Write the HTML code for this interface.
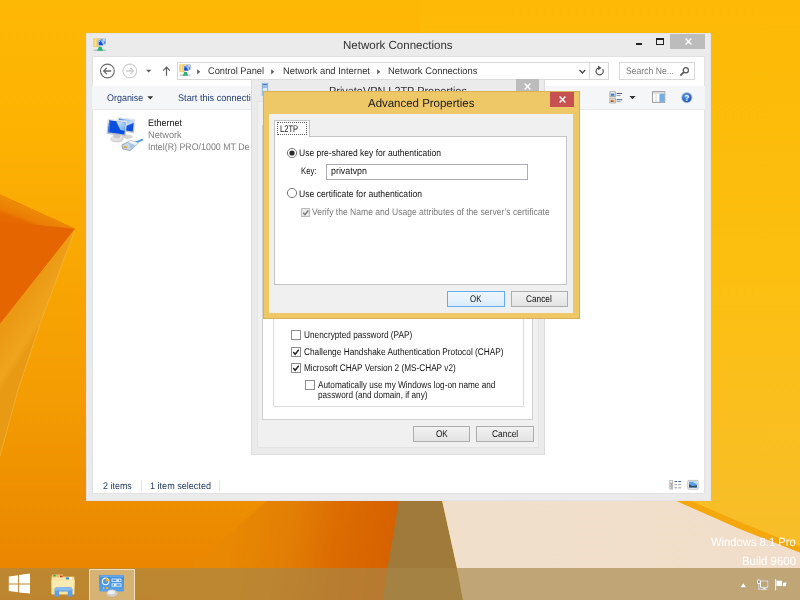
<!DOCTYPE html>
<html lang="en"><head><meta charset="utf-8"><title>Network Connections</title>
<style>
html,body{margin:0;padding:0}
body{width:800px;height:600px;overflow:hidden;position:relative;background:#FBB511;font-family:"Liberation Sans",sans-serif}
.a{position:absolute;box-sizing:border-box}
.t{position:absolute;white-space:nowrap;line-height:1;transform-origin:0 0;text-rendering:geometricPrecision;filter:blur(0.35px);font-family:"Liberation Sans",sans-serif}
svg{position:absolute;overflow:visible}
.clip{position:absolute;overflow:hidden}
.btn{position:absolute;box-sizing:border-box;border:1px solid #ADADAD;background:linear-gradient(#F2F2F2,#E3E3E3)}
.cb{position:absolute;box-sizing:border-box;border:1px solid #6E6E6E;background:#FFF}
</style></head>
<body>
<svg id="wall" width="800" height="600" viewBox="0 0 800 600" style="left:0;top:0">
<defs>
<linearGradient id="gR" x1="0" y1="0" x2="0" y2="1"><stop offset="0" stop-color="#FDB905"/><stop offset="0.45" stop-color="#FCBF10"/><stop offset="0.9" stop-color="#F8BE2A"/></linearGradient>
<linearGradient id="gL" x1="0" y1="0" x2="0" y2="1"><stop offset="0" stop-color="#FDB805"/><stop offset="0.225" stop-color="#FDB202"/><stop offset="0.333" stop-color="#FBAC03"/><stop offset="0.667" stop-color="#F39C03"/><stop offset="0.89" stop-color="#EC8A00"/><stop offset="1" stop-color="#E88200"/></linearGradient>
<linearGradient id="gTri" gradientUnits="userSpaceOnUse" x1="30" y1="206" x2="24" y2="222"><stop offset="0" stop-color="#EF8C08"/><stop offset="0.75" stop-color="#EB7E04"/><stop offset="1" stop-color="#E66A00"/></linearGradient>
<linearGradient id="gFold" gradientUnits="userSpaceOnUse" x1="20" y1="300" x2="48" y2="318"><stop offset="0" stop-color="#EB9814"/><stop offset="0.8" stop-color="#EFA41E"/><stop offset="1" stop-color="#E99A14"/></linearGradient>
<linearGradient id="gOr" gradientUnits="userSpaceOnUse" x1="232" y1="530" x2="395" y2="562"><stop offset="0" stop-color="#E98803"/><stop offset="0.35" stop-color="#E27E04"/><stop offset="0.62" stop-color="#DC6C02"/><stop offset="1" stop-color="#D66000"/></linearGradient>
<linearGradient id="gCream" gradientUnits="userSpaceOnUse" x1="450" y1="560" x2="760" y2="520"><stop offset="0" stop-color="#F0E0CB"/><stop offset="1" stop-color="#F1DECA"/></linearGradient>
</defs>
<rect x="0" y="0" width="800" height="600" fill="url(#gR)"/>
<rect x="0" y="0" width="420" height="600" fill="url(#gL)"/>
<polygon points="0,194.5 75,228.8 0,324" fill="#E56600"/><polygon points="0,194.5 75,228.8 0,221" fill="url(#gTri)"/>
<polygon points="74.5,230.5 40,324 18,390 0,456 0,324" fill="url(#gFold)"/><polyline points="74.5,231 40,324 18,390 0,456" fill="none" stroke="#F6BC48" stroke-width="0.8" stroke-opacity="0.7"/>
<polygon points="290,480 420,480 420,600 156,600" fill="url(#gOr)"/>
<polygon points="402,480 439,480 442,500 457,568 463,600 383,600 387.5,568 399,500" fill="#A07A3A"/>
<polygon points="439,480 629,480 675.5,500.5 740,529 800,552.5 800,600 463,600 457,568 442,500" fill="url(#gCream)"/>
<polygon points="629,480 675.5,500.5 740,529 800,552.5 800,546.5 740,522 690,500.5 642,480" fill="#F4A80E"/>
</svg>
<!-- ================= Explorer window ================= -->
<div class="a" id="explorer" style="left:86px;top:33px;width:624.7px;height:467.5px;background:#EBEBEB;border:1px solid #E4E4E8">
</div>
<div class="a" id="client" style="left:91.7px;top:56.4px;width:613.3px;height:438.1px;background:#FFF;border:1px solid #E2E2E2"></div>
<div class="a" id="cmdbar" style="left:92px;top:86px;width:613px;height:24px;background:#F5F6F7;border-bottom:1px solid #E9EAEB"></div>
<svg style="left:93.30px;top:37.90px" width="13.26" height="13.26" viewBox="0 0 13 13"><rect x="0.3" y="0.3" width="6.6" height="8.6" fill="#F2CC68"/><rect x="1.7" y="1" width="1.5" height="7.2" fill="#FAE6A4"/><rect x="4.4" y="0.8" width="1.2" height="7.6" fill="#E8B850"/><rect x="6.8" y="0.4" width="5.8" height="6" fill="#AEB8C6"/><rect x="7.6" y="1" width="4.4" height="4.6" fill="#4C84DC"/><polygon points="9,1 12,1 12,4" fill="#B4D2F4"/><rect x="4.8" y="1.7" width="5.9" height="6.4" fill="#E6EAF0"/><rect x="5.5" y="2.4" width="4.5" height="4.8" fill="#1650D8"/><polygon points="7.4,2.4 10,2.4 10,6.6" fill="#9CC8F4"/><rect x="5.9" y="2.8" width="1" height="1" fill="#DDEBFA"/><polygon points="5.7,8.7 8.3,8.7 9.5,12 4.3,12" fill="#1DB86A"/><rect x="0.6" y="11.5" width="12" height="0.9" fill="#A0A8B4"/><rect x="4.2" y="11.4" width="5.4" height="1.1" fill="#1DB86A"/></svg>
<span class="t" style="left:343.30px;top:40.00px;font-size:11.70px;transform:scaleX(0.9865);color:#333;">Network Connections</span>
<div class="a" style="left:636px;top:43.3px;width:6.4px;height:1.8px;background:#222"></div>
<div class="a" style="left:655.6px;top:38.2px;width:8.4px;height:6.6px;border:1.1px solid #222;border-top-width:2.2px"></div>
<div class="a" style="left:670.3px;top:33.8px;width:34.8px;height:14.8px;background:#BCBCBC"></div>
<svg style="left:684.8px;top:38.2px" width="7" height="7" viewBox="0 0 7 7"><path d="M0.6 0.6 L6.4 6.4 M6.4 0.6 L0.6 6.4" stroke="#FFF" stroke-width="1.4" fill="none"/></svg>
<svg style="left:99px;top:63px" width="80" height="16" viewBox="99 63 80 16"><circle cx="107.4" cy="71" r="6.9" fill="none" stroke="#6A6A6A" stroke-width="1.1"/><path d="M111.2 71 H104 M106.8 67.9 L103.7 71 L106.8 74.1" fill="none" stroke="#6A6A6A" stroke-width="1.3"/><circle cx="129.8" cy="71" r="6.9" fill="none" stroke="#CFCFCF" stroke-width="1.1"/><path d="M126 71 H133.2 M130.4 67.9 L133.5 71 L130.4 74.1" fill="none" stroke="#CFCFCF" stroke-width="1.3"/><polygon points="146.1,69.7 151.3,69.7 148.7,72.5" fill="#5E5E5E"/><path d="M166.5 75.8 V67.4 M163.2 70.6 L166.5 67.2 L169.8 70.6" fill="none" stroke="#5E5E5E" stroke-width="1.2"/></svg>
<div class="a" style="left:176.6px;top:62.2px;width:432px;height:17.4px;border:1px solid #D9D9D9;background:#FFF"></div>
<div class="a" style="left:589.4px;top:62.2px;width:1px;height:17.4px;background:#D9D9D9"></div>
<svg style="left:179.20px;top:64.40px" width="12.09" height="12.09" viewBox="0 0 13 13"><rect x="0.3" y="0.3" width="6.6" height="8.6" fill="#F2CC68"/><rect x="1.7" y="1" width="1.5" height="7.2" fill="#FAE6A4"/><rect x="4.4" y="0.8" width="1.2" height="7.6" fill="#E8B850"/><rect x="6.8" y="0.4" width="5.8" height="6" fill="#AEB8C6"/><rect x="7.6" y="1" width="4.4" height="4.6" fill="#4C84DC"/><polygon points="9,1 12,1 12,4" fill="#B4D2F4"/><rect x="4.8" y="1.7" width="5.9" height="6.4" fill="#E6EAF0"/><rect x="5.5" y="2.4" width="4.5" height="4.8" fill="#1650D8"/><polygon points="7.4,2.4 10,2.4 10,6.6" fill="#9CC8F4"/><rect x="5.9" y="2.8" width="1" height="1" fill="#DDEBFA"/><polygon points="5.7,8.7 8.3,8.7 9.5,12 4.3,12" fill="#1DB86A"/><rect x="0.6" y="11.5" width="12" height="0.9" fill="#A0A8B4"/><rect x="4.2" y="11.4" width="5.4" height="1.1" fill="#1DB86A"/></svg>
<svg style="left:197.10px;top:68.60px" width="3.4" height="5.6" viewBox="0 0 3.4 5.6"><polygon points="0.2,0.2 3.2,2.8 0.2,5.4" fill="#5E5E5E"/></svg>
<span class="t" style="left:208.00px;top:67.00px;font-size:9.60px;transform:scaleX(0.9627);color:#333;">Control Panel</span>
<svg style="left:271.30px;top:68.60px" width="3.4" height="5.6" viewBox="0 0 3.4 5.6"><polygon points="0.2,0.2 3.2,2.8 0.2,5.4" fill="#5E5E5E"/></svg>
<span class="t" style="left:282.50px;top:67.00px;font-size:9.60px;transform:scaleX(0.9763);color:#333;">Network and Internet</span>
<svg style="left:377.30px;top:68.60px" width="3.4" height="5.6" viewBox="0 0 3.4 5.6"><polygon points="0.2,0.2 3.2,2.8 0.2,5.4" fill="#5E5E5E"/></svg>
<span class="t" style="left:387.50px;top:67.00px;font-size:9.60px;transform:scaleX(0.9809);color:#333;">Network Connections</span>
<svg style="left:578px;top:66px" width="30" height="12" viewBox="578 66 30 12"><path d="M579.6 70 L582.4 73 L585.2 70" fill="none" stroke="#444" stroke-width="1.3"/><path d="M602.6 69.2 A3.6 3.6 0 1 1 598.2 68" fill="none" stroke="#555" stroke-width="1.2"/><polygon points="598,65.6 601.6,68 598,70.2" fill="#555"/></svg>
<div class="a" style="left:619.2px;top:62.2px;width:75.4px;height:17.4px;border:1px solid #D9D9D9;background:#FFF"></div>
<span class="t" style="left:626.00px;top:67.00px;font-size:9.60px;transform:scaleX(0.8996);color:#7A7A7A;">Search Ne...</span>
<svg style="left:679px;top:66px" width="11" height="11" viewBox="0 0 11 11"><circle cx="6.8" cy="4.2" r="2.6" fill="none" stroke="#555" stroke-width="1.2"/><path d="M4.9 6.1 L1.4 9.6" stroke="#555" stroke-width="1.6"/></svg>
<span class="t" style="left:106.80px;top:94.00px;font-size:9.60px;transform:scaleX(0.9319);color:#26407C;">Organise</span>
<svg style="left:147px;top:96px" width="7" height="4" viewBox="0 0 7 4"><polygon points="0.4,0.3 6.2,0.3 3.3,3.6" fill="#333"/></svg>
<div class="clip" style="left:170px;top:88px;width:81px;height:20px"><span class="t" style="left:7.75px;top:6.00px;font-size:9.60px;transform:scaleX(0.9547);color:#26407C;">Start this connection</span></div>
<svg style="left:609px;top:91px" width="30" height="13" viewBox="609 91 30 13"><rect x="609.9" y="91.8" width="5.4" height="4.8" fill="#F4F4F4" stroke="#9A9A9A" stroke-width="0.8"/><rect x="610.8" y="93.6" width="3.6" height="2.2" fill="#3C78C8"/><rect x="609.9" y="98.1" width="5.4" height="4.8" fill="#F4F4F4" stroke="#9A9A9A" stroke-width="0.8"/><rect x="610.8" y="99.6" width="3.6" height="2.4" fill="#C8A030"/><rect x="610.8" y="100.6" width="1.8" height="1.4" fill="#C83C30"/><rect x="616.6" y="93" width="5.6" height="1" fill="#4A5F8C"/><rect x="616.6" y="95" width="4" height="0.9" fill="#8C96AA"/><rect x="616.6" y="99.2" width="5.6" height="1" fill="#4A5F8C"/><rect x="616.6" y="101.2" width="4" height="0.9" fill="#8C96AA"/><polygon points="629.4,96 635.6,96 632.5,99.3" fill="#333"/></svg>
<svg style="left:652px;top:91px" width="14" height="12" viewBox="652 91 14 12"><rect x="652.6" y="91.7" width="12.2" height="10.6" fill="#FFF" stroke="#8E8E8E" stroke-width="0.9"/><rect x="653" y="92.1" width="11.4" height="1.6" fill="#D8D8D8"/><rect x="659.4" y="93.7" width="5" height="8.2" fill="#6FAEEB"/><rect x="655.6" y="93.7" width="0.8" height="8.2" fill="#C8C8C8"/></svg>
<svg style="left:680px;top:91px" width="13" height="13" viewBox="0 0 13 13"><defs><radialGradient id="hg" cx="0.4" cy="0.3" r="0.8"><stop offset="0" stop-color="#5C9CF0"/><stop offset="1" stop-color="#1448B4"/></radialGradient></defs><circle cx="6.8" cy="6.6" r="5.6" fill="#B8C4D8"/><circle cx="6.8" cy="6.6" r="4.7" fill="url(#hg)"/><text x="6.8" y="9.6" font-family="Liberation Sans, sans-serif" font-weight="bold" font-size="8.2" text-anchor="middle" fill="#FFF">?</text></svg>
<svg style="left:104px;top:114px" width="42" height="40" viewBox="104 114 42 40"><defs><linearGradient id="gls" x1="0" y1="0" x2="1" y2="1"><stop offset="0" stop-color="#D8EAFA"/><stop offset="1" stop-color="#6CA8EE"/></linearGradient><linearGradient id="scr2" x1="0" y1="0" x2="0.5" y2="1"><stop offset="0" stop-color="#2E70E4"/><stop offset="0.3" stop-color="#9CC6F4"/><stop offset="0.62" stop-color="#C4DEF8"/><stop offset="0.7" stop-color="#1456E0"/><stop offset="1" stop-color="#0A4CDC"/></linearGradient><linearGradient id="frm" x1="0" y1="0" x2="0" y2="1"><stop offset="0" stop-color="#E8EAEE"/><stop offset="1" stop-color="#B8BCC4"/></linearGradient></defs><ellipse cx="127.4" cy="136.8" rx="5.4" ry="2.2" fill="#D6D6D6"/><polygon points="117.6,117 135.3,119.3 133.8,133 116.6,130.4" fill="url(#frm)"/><polygon points="118.9,118.5 134,120.5 132.7,131.5 117.9,129.2" fill="url(#scr2)"/><ellipse cx="116.9" cy="139" rx="6.7" ry="3.5" fill="#D4D4D4"/><ellipse cx="116.6" cy="138.4" rx="5.2" ry="2.4" fill="#E2E2E2"/><polygon points="113.4,133.6 120.2,134.6 119.6,138.4 113.8,137.8" fill="#C8C8C8"/><polygon points="107.7,118.4 126.9,121.1 125.7,136.2 106.5,133.7" fill="url(#frm)"/><polygon points="109.2,120.2 125.4,122.5 124.4,134.4 108.1,132.3" fill="#0A4EE0"/><polygon points="116.2,121.2 125.4,122.5 124.7,131 120.2,129.8" fill="url(#gls)"/><polygon points="109.2,120.2 110.4,120.4 109.4,132.5 108.1,132.3" fill="#3C78E8"/><path d="M134.2 143 Q138.6 141.4 142.8 139.3" stroke="#4C9CE4" stroke-width="2" fill="none"/><polygon points="122,144.9 130.6,140.6 138.4,143 130.4,150.6 122.6,148.9" fill="#C8D8E8" stroke="#7C8898" stroke-width="0.7"/><polygon points="130.6,140.6 138.4,143 135.6,145.6 127.8,142.2" fill="#EAF2FA"/><polygon points="127.8,142.2 135.6,145.6 130.4,150.6 130,146.6" fill="#A8C4E0"/><rect x="123.6" y="146.2" width="3.6" height="1.6" fill="#D8A030" transform="rotate(12 125 147)"/></svg>
<span class="t" style="left:147.90px;top:119.00px;font-size:9.60px;transform:scaleX(0.9369);color:#111;">Ethernet</span>
<span class="t" style="left:147.90px;top:131.00px;font-size:9.60px;transform:scaleX(0.9572);color:#808080;">Network</span>
<div class="clip" style="left:140px;top:140px;width:110px;height:14px"><span class="t" style="left:8.00px;top:3.00px;font-size:9.60px;transform:scaleX(0.9215);color:#808080;">Intel(R) PRO/1000 MT Desktop Adapter</span></div>
<span class="t" style="left:103.40px;top:482.00px;font-size:9.60px;transform:scaleX(0.9308);color:#1E395B;">2 items</span>
<div class="a" style="left:140.5px;top:480px;width:1px;height:11px;background:#E6E6E6"></div>
<span class="t" style="left:149.50px;top:482.00px;font-size:9.60px;transform:scaleX(0.9448);color:#1E395B;">1 item selected</span>
<div class="a" style="left:218.8px;top:480px;width:1px;height:11px;background:#E6E6E6"></div>
<svg style="left:669px;top:479px" width="31" height="12" viewBox="669 479 31 12"><rect x="669.8" y="480.3" width="3" height="2.6" fill="#F2F2F2" stroke="#A0A0A0" stroke-width="0.6"/><rect x="669.8" y="483.4" width="3" height="2.6" fill="#F2F2F2" stroke="#A0A0A0" stroke-width="0.6"/><rect x="669.8" y="486.5" width="3" height="2.6" fill="#F2F2F2" stroke="#A0A0A0" stroke-width="0.6"/><rect x="670.8" y="484.2" width="1" height="1.2" fill="#D83030"/><rect x="670.8" y="487.2" width="1" height="1.4" fill="#4C9CE4"/><rect x="674.4" y="481.1" width="2.8" height="1" fill="#46648C"/><rect x="678.2" y="481.1" width="3" height="1" fill="#46648C"/><rect x="674.4" y="484.2" width="2.8" height="1" fill="#9A9A9A"/><rect x="678.2" y="484.2" width="3" height="1" fill="#9A9A9A"/><rect x="674.4" y="487.3" width="2.8" height="1" fill="#9A9A9A"/><rect x="678.2" y="487.3" width="3" height="1" fill="#9A9A9A"/><rect x="687.8" y="480.4" width="10.4" height="8.8" rx="1" fill="#F4F4F4" stroke="#B4B4B4" stroke-width="0.8"/><rect x="689" y="481.6" width="8" height="6" fill="#5CA0E8"/><polygon points="689,487.6 689,484.4 692.4,486 697,485.2 697,487.6" fill="#34506C"/><polygon points="692,481.6 697,481.6 697,484.6" fill="#C4DCF4"/></svg>
<!-- ================= PrivateVPN L2TP Properties dialog ================= -->
<div class="a" style="left:251px;top:78.5px;width:294px;height:376px;background:#EBEBEB;border:1px solid #DDDDDD"></div>
<div class="a" style="left:256.6px;top:101.3px;width:282.8px;height:347.1px;background:#F0F0F0;border:1px solid #E4E4E4"></div>
<svg style="left:261.8px;top:83.2px" width="6" height="12.5" viewBox="0 0 6 12.5"><rect x="0.3" y="0.3" width="5.4" height="11.9" fill="#DCEBFA" stroke="#78B0EE" stroke-width="0.9"/><rect x="0.8" y="1.3" width="4.4" height="1" fill="#2A4A8C"/><rect x="0.8" y="3.4" width="4.4" height="1.2" fill="#6C9CE0"/></svg>
<span class="t" style="left:329.00px;top:86.00px;font-size:11.70px;transform:scaleX(0.9321);color:#333;">PrivateVPN L2TP Properties</span>
<div class="a" style="left:516px;top:78.8px;width:23px;height:15.6px;background:#BCBCBC"></div>
<svg style="left:524.2px;top:82.6px" width="7" height="7" viewBox="0 0 7 7"><path d="M0.6 0.6 L6.4 6.4 M6.4 0.6 L0.6 6.4" stroke="#FFF" stroke-width="1.4" fill="none"/></svg>
<div class="a" style="left:262px;top:125px;width:271px;height:294.5px;background:#FFF;border:1px solid #D0D0D0"></div>
<div class="a" style="left:273px;top:200px;width:250.6px;height:206.5px;border:1px solid #DCDCDC"></div>
<div class="cb" style="left:290.80px;top:330.00px;width:10.00px;height:10.00px;border-color:#8C8C8C"></div>
<span class="t" style="left:303.75px;top:331.00px;font-size:9.80px;transform:scaleX(0.8433);color:#151515;">Unencrypted password (PAP)</span>
<div class="cb" style="left:290.80px;top:347.00px;width:10.00px;height:10.00px;border-color:#8C8C8C"></div><svg style="left:290.80px;top:347.00px" width="10.00" height="10.00" viewBox="0 0 10 10"><path d="M2.3 5 L4.2 7.2 L7.8 2.6" fill="none" stroke="#222" stroke-width="1.5"/></svg>
<span class="t" style="left:303.75px;top:348.00px;font-size:9.80px;transform:scaleX(0.8464);color:#151515;">Challenge Handshake Authentication Protocol (CHAP)</span>
<div class="cb" style="left:290.80px;top:363.20px;width:10.00px;height:10.00px;border-color:#8C8C8C"></div><svg style="left:290.80px;top:363.20px" width="10.00" height="10.00" viewBox="0 0 10 10"><path d="M2.3 5 L4.2 7.2 L7.8 2.6" fill="none" stroke="#222" stroke-width="1.5"/></svg>
<span class="t" style="left:303.75px;top:364.00px;font-size:9.80px;transform:scaleX(0.8410);color:#151515;">Microsoft CHAP Version 2 (MS-CHAP v2)</span>
<div class="cb" style="left:304.50px;top:380.00px;width:10.00px;height:10.00px;border-color:#8C8C8C"></div>
<span class="t" style="left:317.50px;top:381.00px;font-size:9.80px;transform:scaleX(0.8399);color:#151515;">Automatically use my Windows log-on name and</span>
<span class="t" style="left:317.50px;top:391.00px;font-size:9.80px;transform:scaleX(0.8341);color:#151515;">password (and domain, if any)</span>
<div class="btn" style="left:412.8px;top:426.1px;width:57.6px;height:15.7px"></div>
<span class="t" style="left:435.90px;top:430.00px;font-size:9.80px;transform:scaleX(0.8334);color:#151515;">OK</span>
<div class="btn" style="left:476.1px;top:426.1px;width:57.7px;height:15.7px"></div>
<span class="t" style="left:492.20px;top:430.00px;font-size:9.80px;transform:scaleX(0.8589);color:#151515;">Cancel</span>
<!-- ================= Advanced Properties dialog ================= -->
<div class="a" style="left:263px;top:90.6px;width:316.6px;height:228.8px;background:#EEC766;border:1px solid #D8B055"></div>
<div class="a" style="left:269.4px;top:114.2px;width:304px;height:198.8px;background:#F0F0F0"></div>
<span class="t" style="left:368.00px;top:98.00px;font-size:11.70px;transform:scaleX(0.9805);color:#1A1A1A;">Advanced Properties</span>
<div class="a" style="left:550px;top:91.6px;width:24px;height:15.6px;background:#C75050"></div>
<svg style="left:558.6px;top:95.6px" width="7" height="7" viewBox="0 0 7 7"><path d="M0.6 0.6 L6.4 6.4 M6.4 0.6 L0.6 6.4" stroke="#FFF" stroke-width="1.4" fill="none"/></svg>
<div class="a" style="left:274.4px;top:135.6px;width:292.8px;height:149px;background:#FFF;border:1px solid #C4C4C4"></div>
<div class="a" style="left:274.4px;top:120px;width:35.4px;height:16.6px;background:#FFF;border:1px solid #C4C4C4;border-bottom:none"></div>
<div class="a" style="left:277px;top:122px;width:30.4px;height:12.6px;border:1px dotted #606060"></div>
<span class="t" style="left:279.80px;top:125.00px;font-size:9.60px;transform:scaleX(0.7932);color:#111;">L2TP</span>
<svg style="left:285.70px;top:147.00px" width="12" height="12" viewBox="0 0 12 12"><circle cx="6" cy="6" r="4.6" fill="#FFF" stroke="#6A6A6A" stroke-width="0.9"/><circle cx="6" cy="6" r="2.6" fill="#2A2A2A"/></svg>
<span class="t" style="left:298.90px;top:149.00px;font-size:9.60px;transform:scaleX(0.8876);color:#111;">Use pre-shared key for authentication</span>
<span class="t" style="left:300.60px;top:167.00px;font-size:9.60px;transform:scaleX(0.8017);color:#111;">Key:</span>
<div class="a" style="left:326px;top:164px;width:202.4px;height:15.8px;background:#FFF;border:1px solid #ABADB3"></div>
<span class="t" style="left:331.00px;top:167.00px;font-size:9.60px;transform:scaleX(0.9242);color:#111;">privatvpn</span>
<svg style="left:285.70px;top:187.20px" width="12" height="12" viewBox="0 0 12 12"><circle cx="6" cy="6" r="4.6" fill="#FFF" stroke="#6A6A6A" stroke-width="0.9"/></svg>
<span class="t" style="left:298.90px;top:190.00px;font-size:9.60px;transform:scaleX(0.8976);color:#111;">Use certificate for authentication</span>
<div class="cb" style="left:300.60px;top:207.60px;width:9.40px;height:9.40px;border-color:#BCBCBC;background:#E9E9E9"></div><svg style="left:300.60px;top:207.60px" width="9.40" height="9.40" viewBox="0 0 10 10"><path d="M2.3 5 L4.2 7.2 L7.8 2.6" fill="none" stroke="#7A7A7A" stroke-width="1.5"/></svg>
<span class="t" style="left:312.20px;top:208.00px;font-size:9.60px;transform:scaleX(0.8925);color:#7A7A7A;">Verify the Name and Usage attributes of the server’s certificate</span>
<div class="btn" style="left:447.4px;top:290.6px;width:57.4px;height:16.4px;border-color:#5FAEF2;background:linear-gradient(#EFF6FD,#DCECFA)"></div>
<span class="t" style="left:469.70px;top:295.00px;font-size:9.60px;transform:scaleX(0.8219);color:#111;">OK</span>
<div class="btn" style="left:511px;top:290.6px;width:57px;height:16.4px"></div>
<span class="t" style="left:525.70px;top:295.00px;font-size:9.60px;transform:scaleX(0.8634);color:#111;">Cancel</span>
<!-- ================= Taskbar ================= -->
<span class="t" style="left:710.75px;top:536.00px;font-size:12.00px;transform:scaleX(0.9344);color:#FFF;">Windows 8.1 Pro</span>
<span class="t" style="left:741.50px;top:555.00px;font-size:12.00px;transform:scaleX(0.9522);color:#FFF;">Build 9600</span>
<div class="a" style="left:0;top:568.4px;width:800px;height:31.6px;background:rgba(166,135,74,0.65)"></div>
<svg style="left:8px;top:572px" width="24" height="24" viewBox="8 572 24 24"><polygon points="8.8,576.6 18.1,575.3 18.1,583.5 8.8,583.5" fill="#FFF"/><polygon points="19.1,575.1 30,573.5 30,583.5 19.1,583.5" fill="#FFF"/><polygon points="8.8,584.5 18.1,584.5 18.1,592.3 8.8,591" fill="#FFF"/><polygon points="19.1,584.5 30,584.5 30,593.6 19.1,592.4" fill="#FFF"/></svg>
<svg style="left:50px;top:573px" width="27" height="25" viewBox="50 573 27 25"><polygon points="51.4,577.2 52.2,574.6 62.6,574.6 63.4,576.6 74.4,576.6 74.4,594 51.4,594" fill="#E9C46A"/><rect x="51.8" y="577.4" width="22.4" height="2.4" fill="#F7E7B0"/><rect x="53.4" y="574.6" width="2.4" height="1.8" fill="#2DB84A"/><rect x="60" y="575.6" width="2.6" height="1.6" fill="#D43A2A"/><rect x="66" y="577.4" width="3" height="2" fill="#3C8CE4"/><rect x="69.4" y="577.4" width="2.6" height="2" fill="#FFF"/><polygon points="51.4,580 74.8,580 74.2,594.6 51.8,594.6" fill="#F8E29A"/><polygon points="52,580.4 74.2,580.4 74,588 52.2,588" fill="#FAEBB4"/><path d="M54.6 596.4 V589.6 Q54.6 587.2 57 587.2 H70 Q72.4 587.2 72.4 589.6 V596.4 H67.8 V591.6 H59.2 V596.4 Z" fill="#5E9EE4"/><path d="M54.6 590.4 Q54.6 587.2 57 587.2 H70 Q72.4 587.2 72.4 590.4 Z" fill="#86BCF0"/></svg>
<div class="a" style="left:88.8px;top:568.6px;width:45.8px;height:31.4px;background:rgba(235,215,175,0.55);border:1px solid rgba(250,238,210,0.75);border-bottom:none"></div>
<svg style="left:98px;top:573px" width="28" height="26" viewBox="98 573 28 26"><defs><linearGradient id="cp" x1="0" y1="0" x2="0" y2="1"><stop offset="0" stop-color="#3C8CDC"/><stop offset="1" stop-color="#5AA2EA"/></linearGradient></defs><rect x="99.2" y="575" width="24.8" height="16.5" rx="0.8" fill="url(#cp)"/><rect x="99.8" y="575.6" width="23.6" height="0.9" fill="#8CC0F4"/><circle cx="105.6" cy="581.4" r="3.2" fill="none" stroke="#E8F2FC" stroke-width="1.2"/><polygon points="105.6,581.4 105.6,577.4 109.8,580.4" fill="#F8A81C"/><rect x="112" y="579" width="9" height="2.4" fill="none" stroke="#E8F2FC" stroke-width="0.8"/><rect x="116.4" y="579.3" width="2.4" height="1.8" fill="#E8F2FC"/><rect x="112" y="583.8" width="9" height="2.4" fill="none" stroke="#E8F2FC" stroke-width="0.8"/><rect x="114" y="584.1" width="2.4" height="1.8" fill="#E8F2FC"/><rect x="106" y="587" width="2.2" height="2" fill="#F8A81C"/><rect x="103.4" y="587.2" width="0.8" height="1.8" fill="#E8F2FC"/><ellipse cx="112" cy="593.2" rx="5.4" ry="3.6" fill="#CFCFCF"/><ellipse cx="111.4" cy="592.2" rx="3.6" ry="2" fill="#EFEFEF"/></svg>
<svg style="left:738px;top:577px;filter:drop-shadow(0 0 0.5px rgba(40,30,10,0.75))" width="52" height="16" viewBox="738 577 52 16"><polygon points="740.2,587.4 746.4,587.4 743.3,583" fill="#FFF"/><rect x="760.5" y="581" width="7.4" height="6.2" fill="none" stroke="#FFF" stroke-width="1.1"/><rect x="763" y="587.6" width="2.6" height="1.2" fill="#FFF"/><rect x="761.2" y="588.7" width="6.2" height="1.1" fill="#FFF"/><rect x="757.1" y="579.3" width="3.6" height="5" rx="0.7" fill="#F4F4F4"/><rect x="758.1" y="580.4" width="1.6" height="2.6" fill="#8A8A8A"/><rect x="758.3" y="584.2" width="1.2" height="5.4" fill="#F4F4F4"/><rect x="758.3" y="588.7" width="3.2" height="1" fill="#F4F4F4"/><rect x="775.1" y="579" width="1.3" height="11.6" fill="#FFF"/><polygon points="776.4,580.4 782,580.4 782,586 776.4,586" fill="#FFF"/><polygon points="782.7,582.6 787,582.2 785.6,586.4 782.7,586.4" fill="#FFF"/></svg>
</body></html>
